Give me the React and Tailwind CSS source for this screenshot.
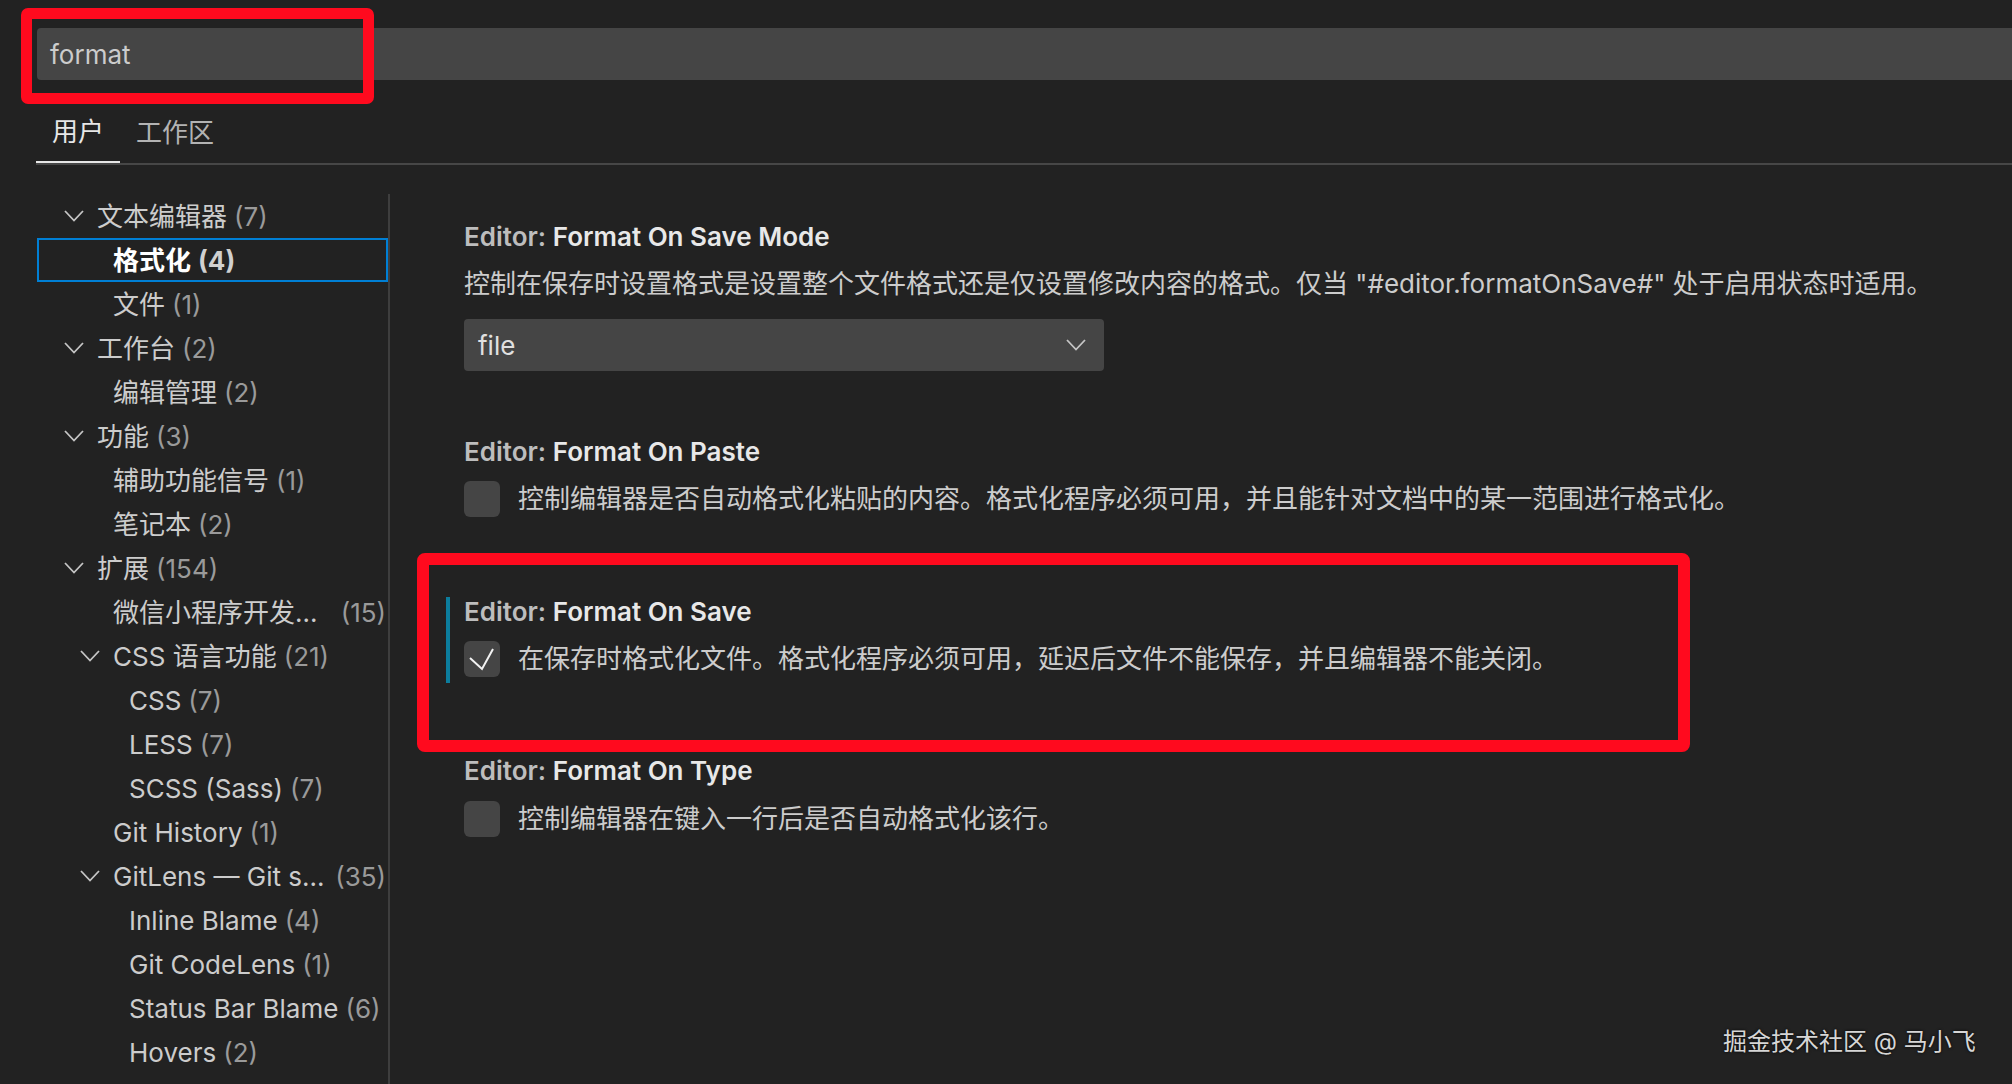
import React from "react";

const tree = [
  { level: 1, label: "文本编辑器", count: 7, open: true },
  { level: 2, label: "格式化", count: 4, selected: true },
  { level: 2, label: "文件", count: 1 },
  { level: 1, label: "工作台", count: 2, open: true },
  { level: 2, label: "编辑管理", count: 2 },
  { level: 1, label: "功能", count: 3, open: true },
  { level: 2, label: "辅助功能信号", count: 1 },
  { level: 2, label: "笔记本", count: 2 },
  { level: 1, label: "扩展", count: 154, open: true },
  { level: 2, label: "微信小程序开发...", count: 15, clipped: true },
  { level: 2, label: "CSS 语言功能", count: 21, open: true },
  { level: 3, label: "CSS", count: 7 },
  { level: 3, label: "LESS", count: 7 },
  { level: 3, label: "SCSS (Sass)", count: 7 },
  { level: 2, label: "Git History", count: 1 },
  { level: 2, label: "GitLens — Git s...", count: 35, open: true, clipped: true },
  { level: 3, label: "Inline Blame", count: 4 },
  { level: 3, label: "Git CodeLens", count: 1 },
  { level: 3, label: "Status Bar Blame", count: 6 },
  { level: 3, label: "Hovers", count: 2 },
];

const indent = { 1: "pl-[25px]", 2: "pl-[41px]", 3: "pl-[57px]" };

const Chevron = ({ className = "" }) => (
  <svg width="20" height="12" viewBox="0 0 20 12" fill="none" className={className}>
    <polyline points="1,1 10,10.5 19,1" stroke="#c5c5c5" strokeWidth="1.8" />
  </svg>
);

const Checkbox = ({ checked }) => (
  <div className="w-[36px] h-[36px] rounded-[6px] bg-[#454545] shrink-0 flex items-center justify-center">
    {checked && (
      <svg width="36" height="36" viewBox="0 0 36 36" fill="none">
        <polyline points="6,17 18,28 29,8" stroke="#f2f2f2" strokeWidth="2" />
      </svg>
    )}
  </div>
);

const Title = ({ name, className = "leading-[36px]" }) => (
  <div className={`text-[26px] font-semibold ${className}`}>
    <span className="text-[#bdbdbd]">Editor: </span>
    <span className="text-[#e8e8e8]">{name}</span>
  </div>
);

const BoolRow = ({ checked, text, className }) => (
  <div className={`flex items-center gap-[18px] ${className}`}>
    <Checkbox checked={checked} />
    <span className="text-[26px] leading-[36px] text-[#cccccc]">{text}</span>
  </div>
);

const App = () => {
  return (
    <div className="relative w-full h-[1084px] overflow-hidden bg-[#222222] font-['Inter','Noto_Sans_CJK_SC',sans-serif]">
      {/* search */}
      <div className="pt-[28px] pl-[37px]">
        <div className="h-[52px] bg-[#454545] rounded-l-[4px] flex items-center pl-[13px] text-[26px] text-[#cccccc]">
          format
        </div>
      </div>

      {/* tabs */}
      <div className="ml-[36px] mt-[21px] flex border-b-2 border-[#474747]">
        <div className="px-[16px] h-[62px] flex items-center text-[26px] text-[#e7e7e7] border-b-2 border-[#e7e7e7] -mb-[2px]">用户</div>
        <div className="px-[16px] h-[62px] flex items-center text-[26px] text-[#b3b3b3]">工作区</div>
      </div>

      <div className="flex mt-[29px]">
        {/* table of contents */}
        <div className="ml-[37px] w-[353px] h-[900px] border-r-2 border-[#3e3e3e] shrink-0">
          {tree.map((item, i) => (
            <div
              key={i}
              className={`h-[44px] flex items-center border-2 text-[26px] ${indent[item.level]} ${item.selected ? "border-[#007fd4] font-bold" : "border-transparent"}`}
            >
              <div className="w-[20px] mr-[13px] flex items-center shrink-0">
                {item.open && <Chevron />}
              </div>
              <span className={`whitespace-nowrap ${item.selected ? "text-white" : "text-[#cccccc]"}`}>{item.label}</span>
              <span className={`whitespace-nowrap ${item.clipped ? "ml-auto" : "ml-[7px]"} ${item.selected ? "text-[#d0d0d0]" : "text-[#9a9a9a]"}`}>({item.count})</span>
            </div>
          ))}
        </div>

        {/* settings list */}
        <div className="flex flex-col pl-[74px]">
          <div className="mt-[25px]">
            <Title name="Format On Save Mode" />
            <div className="mt-[11px] text-[26px] leading-[36px] text-[#cccccc] whitespace-nowrap">
              控制在保存时设置格式是设置整个文件格式还是仅设置修改内容的格式。仅当 "#editor.formatOnSave#" 处于启用状态时适用。
            </div>
            <div className="mt-[17px] w-[640px] h-[52px] rounded-[4px] bg-[#454545] flex items-center justify-between pl-[14px] pr-[18px]">
              <span className="text-[26px] text-[#e0e0e0]">file</span>
              <Chevron />
            </div>
          </div>

          <div className="mt-[63px]">
            <Title name="Format On Paste" />
            <BoolRow className="mt-[11px]" text="控制编辑器是否自动格式化粘贴的内容。格式化程序必须可用，并且能针对文档中的某一范围进行格式化。" />
          </div>

          <div className="mt-[80px] -ml-[18px] pl-[14px] pb-[6px] border-l-4 border-[#0c7d9d]">
            <Title name="Format On Save" className="leading-[30px]" />
            <BoolRow checked className="mt-[14px]" text="在保存时格式化文件。格式化程序必须可用，延迟后文件不能保存，并且编辑器不能关闭。" />
          </div>

          <div className="mt-[70px]">
            <Title name="Format On Type" />
            <BoolRow className="mt-[12px]" text="控制编辑器在键入一行后是否自动格式化该行。" />
          </div>
        </div>
      </div>

      {/* annotation boxes */}
      <div className="absolute left-[21px] top-[8px] w-[353px] h-[96px] border-[11px] border-[#ff0a1e] rounded-[7px]" />
      <div className="absolute left-[417px] top-[553px] w-[1273px] h-[199px] border-[12px] border-[#ff0a1e] rounded-[8px]" />

      {/* watermark */}
      <div className="absolute left-[1723px] top-[1026px] text-[24px] leading-[32px] text-[#d6d6d6] whitespace-nowrap [text-shadow:0_0_3px_#000]">
        掘金技术社区 @ 马小飞
      </div>
    </div>
  );
};

export default App;
